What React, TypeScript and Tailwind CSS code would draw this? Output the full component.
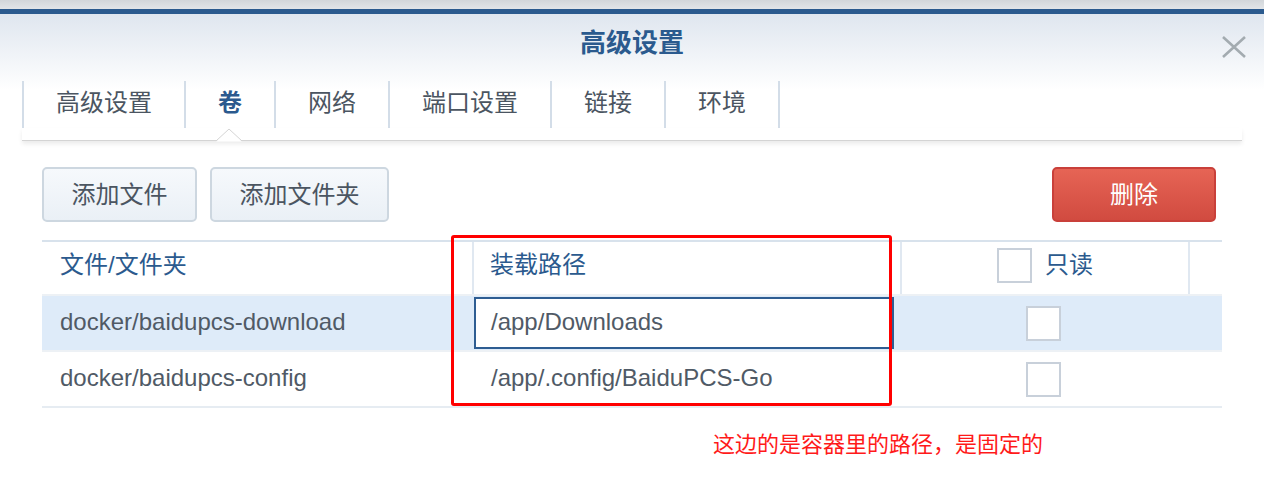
const font = { fontFamily: '"Liberation Sans", "Noto Sans CJK SC", sans-serif' };

const tabs = ["高级设置", "卷", "网络", "端口设置", "链接", "环境"];

const rows = [
  { source: "docker/baidupcs-download", target: "/app/Downloads", selected: true },
  { source: "docker/baidupcs-config", target: "/app/.config/BaiduPCS-Go", selected: false },
];

function Checkbox() {
  return <span className="block w-[35px] h-[35px] border-2 border-[#c8d0da] bg-white" />;
}

export default function App() {
  return (
    <div className="w-[1264px] h-[498px] bg-white overflow-hidden" style={font}>
      <div className="h-[9px] bg-gradient-to-b from-[#d2d6da] to-[#e2e5e8]" />
      <div className="h-[5px] bg-[#2b5a8e]" />

      {/* Header */}
      <div className="relative bg-gradient-to-b from-[#dfe6ef] via-white via-60% to-white">
        <div className="h-[58px] flex items-center justify-center">
          <span className="text-[26px] font-bold text-[#2b5a8e] leading-none">高级设置</span>
        </div>
        <button className="absolute left-[1220px] top-[21px] w-[28px] h-[24px] flex items-center justify-center">
          <svg width="26" height="22" viewBox="0 0 26 22">
            <path d="M2 1 L24 21 M24 1 L2 21" stroke="#a3abb0" strokeWidth="2.6" fill="none" />
          </svg>
        </button>

        <div className="mt-[9px] ml-[22px] flex h-[47px] border-l-2 border-[#d3dde8]">
          {tabs.map((t, i) => (
            <div
              key={t}
              className={`px-[32px] pb-[4px] flex items-center border-r-2 border-[#d3dde8] text-[24px] leading-none ${
                i === 1 ? "font-bold text-[#2b5a8e]" : "text-[#4b5561]"
              }`}
            >
              {t}
            </div>
          ))}
        </div>

        {/* tab underline with notch */}
        <div className="relative ml-[22px] w-[1220px] h-[13px] border-b border-[#d4d4d4] shadow-[0_3px_4px_rgba(0,0,0,0.08)]">
          <svg className="absolute left-[194px] top-0" width="26" height="14" viewBox="0 0 26 14">
            <path d="M0 13.5 L13 1 L26 13.5 Z" fill="white" />
            <path d="M0 13 L13 1 L26 13" stroke="#d4d4d4" strokeWidth="1" fill="none" />
          </svg>
        </div>
      </div>

      {/* Body */}
      <div className="px-[42px] pt-[26px]">
        <div className="flex items-center">
          <button className="w-[155px] h-[55px] rounded-[5px] border-2 border-[#cdd7e0] bg-gradient-to-b from-[#f6f9fc] to-[#eaf0f6] text-[24px] text-[#4b5561]">
            添加文件
          </button>
          <button className="ml-[13px] w-[179px] h-[55px] rounded-[5px] border-2 border-[#cdd7e0] bg-gradient-to-b from-[#f6f9fc] to-[#eaf0f6] text-[24px] text-[#4b5561]">
            添加文件夹
          </button>
          <button className="ml-auto mr-[6px] w-[164px] h-[55px] rounded-[5px] border-2 border-[#c9403a] bg-gradient-to-b from-[#e66455] to-[#d14b40] text-[24px] text-white">
            删除
          </button>
        </div>

        {/* Table */}
        <div className="relative mt-[18px] w-[1180px]">
          <div className="grid grid-cols-[430px_428px_288px_34px] h-[54px] border-t-2 border-[#d8e2ec] text-[24px] text-[#2b5a8e]">
            <div className="flex items-center pl-[18px] pb-[6px]">文件/文件夹</div>
            <div className="flex items-center pl-[16px] pb-[6px] border-l-2 border-[#e0e8f1]">装载路径</div>
            <div className="flex items-center justify-center gap-[13px] pb-[6px] border-l-2 border-[#e0e8f1]">
              <Checkbox />
              <span>只读</span>
            </div>
            <div className="border-l-2 border-[#e0e8f1]" />
          </div>

          {rows.map((r) => (
            <div
              key={r.source}
              className={`grid grid-cols-[430px_428px_288px_34px] h-[56px] border-t-2 border-[#edf1f5] text-[24px] text-[#505a66] ${
                r.selected ? "bg-[#deebf9]" : "bg-white"
              }`}
            >
              <div className="flex items-center pl-[18px] pb-[3px]">{r.source}</div>
              <div className="flex items-center py-[1px] pl-[2px]">
                {r.selected ? (
                  <div className="w-[420px] h-full flex items-center pl-[15px] pb-[3px] bg-white border-2 border-[#2e5d92]">
                    {r.target}
                  </div>
                ) : (
                  <div className="pl-[17px] pb-[3px]">{r.target}</div>
                )}
              </div>
              <div className="flex items-center justify-center pr-[2px]">
                <Checkbox />
              </div>
              <div />
            </div>
          ))}
          <div className="h-[2px] bg-[#e6ecf2]" />

          {/* red annotation frame */}
          <div className="absolute left-[409px] top-[-5px] w-[441px] h-[171px] border-[3px] border-[#ff0000] rounded-[3px]" />
        </div>

        <div className="mt-[26px] ml-[671px] text-[22px] leading-none text-[#ff1a1a]">
          这边的是容器里的路径，是固定的
        </div>
      </div>
    </div>
  );
}
